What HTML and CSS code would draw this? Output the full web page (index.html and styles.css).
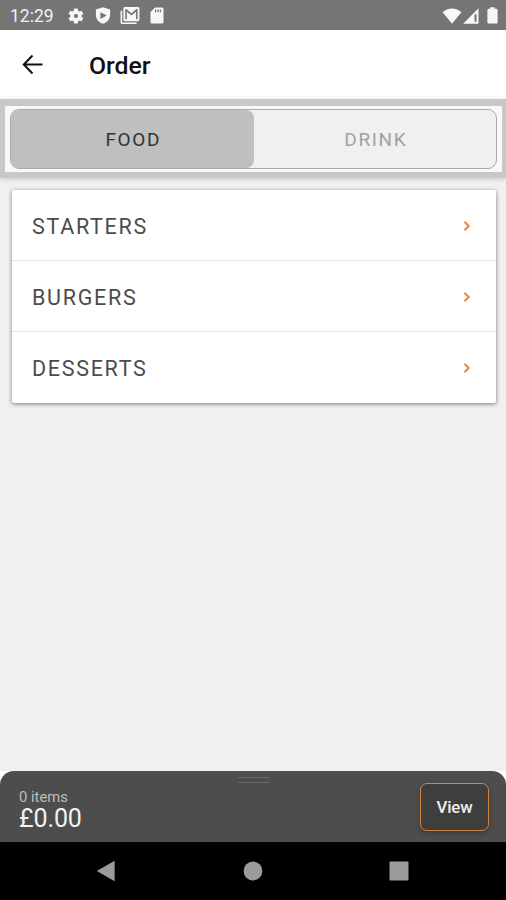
FILE: index.html
```html
<!DOCTYPE html>
<html lang="en">
<head>
  <meta charset="UTF-8">
  <meta name="viewport" content="width=device-width, initial-scale=1.0">
  <title>Order</title>
  <link rel="stylesheet" href="styles.css">
</head>
<body>
  <div class="screen">
    <div class="status-bar">
      <span class="time">12:29</span>
      <div class="notifications">
        <svg width="18" height="18" viewBox="0 0 24 24"><path fill-rule="evenodd" d="M19.4 13a7.500 7.500 0 0 0 0-2l2.100-1.650a.5.5 0 0 0 .1-.65l-2-3.450a.5.5 0 0 0-.6-.2l-2.500 1a7.300 7.300 0 0 0-1.700-1l-.4-2.650a.5.5 0 0 0-.5-.4h-4a.5.5 0 0 0-.5.4L9 5.050a7.700 7.700 0 0 0-1.700 1l-2.500-1a.5.5 0 0 0-.6.2l-2 3.450a.5.5 0 0 0 .1.650L4.500 11a7.900 7.900 0 0 0 0 2l-2.200 1.650a.5.5 0 0 0-.1.650l2 3.450c.1.200.4.300.6.200l2.500-1c.5.400 1.100.7 1.700 1l.4 2.650c0 .2.200.4.5.4h4c.3 0 .5-.2.5-.4l.4-2.650a7.300 7.300 0 0 0 1.700-1l2.500 1c.2.100.5 0 .6-.2l2-3.450a.5.5 0 0 0-.1-.650zM12 14.800a2.800 2.800 0 1 1 0-5.600 2.800 2.800 0 0 1 0 5.600z"/></svg>
        <svg width="18" height="19" viewBox="0 0 24 24"><path fill-rule="evenodd" d="M12 1 2.500 4v7c0 5.800 4 10.500 9.500 12 5.500-1.500 9.500-6.200 9.500-12V4zM8.500 7.500 17 12l-8.500 4.500z"/></svg>
        <svg class="mail" width="20" height="17" viewBox="0 0 20 18"><path d="M0 4h1.700v12.300H17V18H1.500A1.500 1.500 0 0 1 0 16.500z"/><path fill-rule="evenodd" d="M4.500 0h14A1.500 1.500 0 0 1 20 1.500v12a1.500 1.500 0 0 1-1.500 1.500h-14A1.500 1.500 0 0 1 3 13.500v-12A1.500 1.500 0 0 1 4.500 0zM5 2v11h1.700V5l4.800 4 4.800-4v8H18V2h-1.200l-5.300 4.500L6.200 2z"/></svg>
        <svg width="14" height="17" viewBox="0 0 14 17"><path fill-rule="evenodd" d="M5 .5h7A1.500 1.500 0 0 1 13.500 2v13a1.500 1.500 0 0 1-1.500 1.500H2A1.500 1.500 0 0 1 .5 15V5zM5 2.500v2.700h1.300V2.500zm2.400 0v2.700h1.300V2.500zm2.400 0v2.700h1.300V2.500z"/></svg>
      </div>
      <div class="signals">
        <svg width="20" height="16" viewBox="0 0 20 16"><path d="M10 15.700.6 4.200C3.200 1.700 6.500.4 10 .4s6.800 1.300 9.400 3.800z"/></svg>
        <svg width="16" height="16" viewBox="0 0 16 16"><path fill-rule="evenodd" d="M15.500.3v15.400H.2zM11.500 6.200v7.500h2V6.200z"/></svg>
        <svg class="battery" width="11" height="17" viewBox="0 0 11 17"><path d="M3.300.3h4.400v1.500h1.300c.9 0 1.600.7 1.600 1.500v11.900c0 .8-.6 1.400-1.400 1.400H1.800c-.8 0-1.400-.6-1.400-1.400V3.300c0-.8.700-1.500 1.600-1.500h1.300z"/></svg>
      </div>
    </div>

    <header class="app-bar">
      <svg class="back" width="22" height="22" viewBox="0 0 22 22"><path d="M20.500 10.500H2M10.500 1.500l-8.700 9 8.700 9"/></svg>
      <h1>Order</h1>
    </header>

    <div class="tabs">
      <div class="segment">
        <button type="button" class="tab active">FOOD</button>
        <button type="button" class="tab">DRINK</button>
      </div>
    </div>

    <main class="content">
      <ul class="menu">
        <li>
          <span>STARTERS</span>
          <svg width="8" height="12" viewBox="0 0 8 12"><path d="M1.500 1.800 5.700 6l-4.200 4.200"/></svg>
        </li>
        <li>
          <span>BURGERS</span>
          <svg width="8" height="12" viewBox="0 0 8 12"><path d="M1.500 1.800 5.700 6l-4.200 4.200"/></svg>
        </li>
        <li>
          <span>DESSERTS</span>
          <svg width="8" height="12" viewBox="0 0 8 12"><path d="M1.500 1.800 5.700 6l-4.200 4.200"/></svg>
        </li>
      </ul>
    </main>

    <div class="basket-wrap">
      <div class="basket">
        <div class="handle"></div>
        <div class="summary">
          <div class="count">0 items</div>
          <div class="total">£0.00</div>
        </div>
        <button type="button" class="view">View</button>
      </div>
    </div>

    <nav class="nav-bar">
      <svg width="20" height="22" viewBox="0 0 20 22"><path d="M18.600.8v20.400L.8 11z"/></svg>
      <svg width="20" height="20" viewBox="0 0 20 20"><circle cx="10" cy="10" r="9.400"/></svg>
      <svg width="20" height="20" viewBox="0 0 20 20"><rect x=".5" y=".5" width="19" height="19" rx="1"/></svg>
    </nav>
  </div>
</body>
</html>
```
FILE: styles.css
```css
* { box-sizing: border-box; }
body { margin: 0; font-family: Roboto, Arial, sans-serif; background: #f0f0f0; }
svg { display: block; flex: none; }
button { padding: 0; font-family: inherit; cursor: pointer; }
.screen { display: flex; flex-direction: column; height: 900px; overflow: hidden; }

/* Status bar */
.status-bar { display: flex; align-items: center; height: 30px; padding: 1px 8px 0 10px; background: #757575; color: #f2f2f2; }
.status-bar svg { fill: #f7f7f7; }
.time { width: 57px; font-size: 17.5px; }
.notifications { display: flex; align-items: center; gap: 9px; }
.notifications .mail { margin: 0 1px 0 -1px; }
.signals { display: flex; align-items: center; gap: 1px; margin-left: auto; }
.battery { margin-left: 7px; }

/* Header */
.app-bar { display: flex; align-items: center; height: 69px; padding: 1px 22px 0; background: #fff; }
.back { fill: none; stroke: #111; stroke-width: 2; }
.app-bar h1 { margin: 2px 0 0 45px; font-size: 24.8px; line-height: 30px; font-weight: 500; color: #111; }

/* Food / drink switch */
.tabs { height: 79px; padding: 3px 4px; border: solid #c8c8c8; border-width: 7px 4px 6px 5px; background: #f8f8f8; box-shadow: 0 1px 5px rgba(0,0,0,0.18); }
.segment { display: flex; height: 60px; margin: 0 1px; border: 1px solid #aaa; border-radius: 9px; background: #f0f0f0; }
.tab { flex: 1; padding: 1px 0 0 2px; border: none; background: none; border-radius: 8px; font-size: 19px; letter-spacing: 1.6px; color: #a2a2a2; }
.tab.active { background: #bfbfbf; color: #333; }

/* Menu categories */
.content { flex: 1; padding: 12px 10px 0 12px; }
.menu { margin: 0; padding: 0; list-style: none; background: #fff; border-radius: 2px; box-shadow: 0 1px 4px rgba(0,0,0,0.5); }
.menu li { display: flex; align-items: center; justify-content: space-between; height: 71px; padding: 2px 25px 0 20px; border-bottom: 1px solid #e4e4e4; }
.menu li:last-child { padding-top: 1px; border-bottom: none; }
.menu span { font-size: 21.5px; letter-spacing: 1.7px; color: #4c4c4c; }
.menu svg { fill: none; stroke: #e88a43; stroke-width: 2; }

/* Basket */
.basket-wrap { background: #fff; }
.basket { position: relative; display: flex; justify-content: space-between; height: 71px; padding: 12px 17px 0 19px; background: #4d4d4d; border-radius: 14px 14px 0 0; }
.handle { position: absolute; top: 6px; left: 238px; width: 32px; height: 6px; border: solid #696969; border-width: 1px 0; }
.summary { padding-top: 5px; }
.count { font-size: 14.8px; line-height: 18px; color: #bebebe; }
.total { font-size: 25px; line-height: 25px; color: #f2f2f2; letter-spacing: -0.1px; }
.view { width: 69px; height: 48px; border: 1.5px solid #d5843c; border-radius: 7px; background: #3e3e3e; color: #eee; font-size: 16.8px; font-weight: 500; letter-spacing: -0.1px; box-shadow: 0 2px 5px rgba(0,0,0,0.25); }

/* Android navigation */
.nav-bar { display: flex; align-items: center; justify-content: space-between; height: 58px; padding: 0 97px 0 96px; background: #000; }
.nav-bar svg { fill: #9b9b9b; }
```
